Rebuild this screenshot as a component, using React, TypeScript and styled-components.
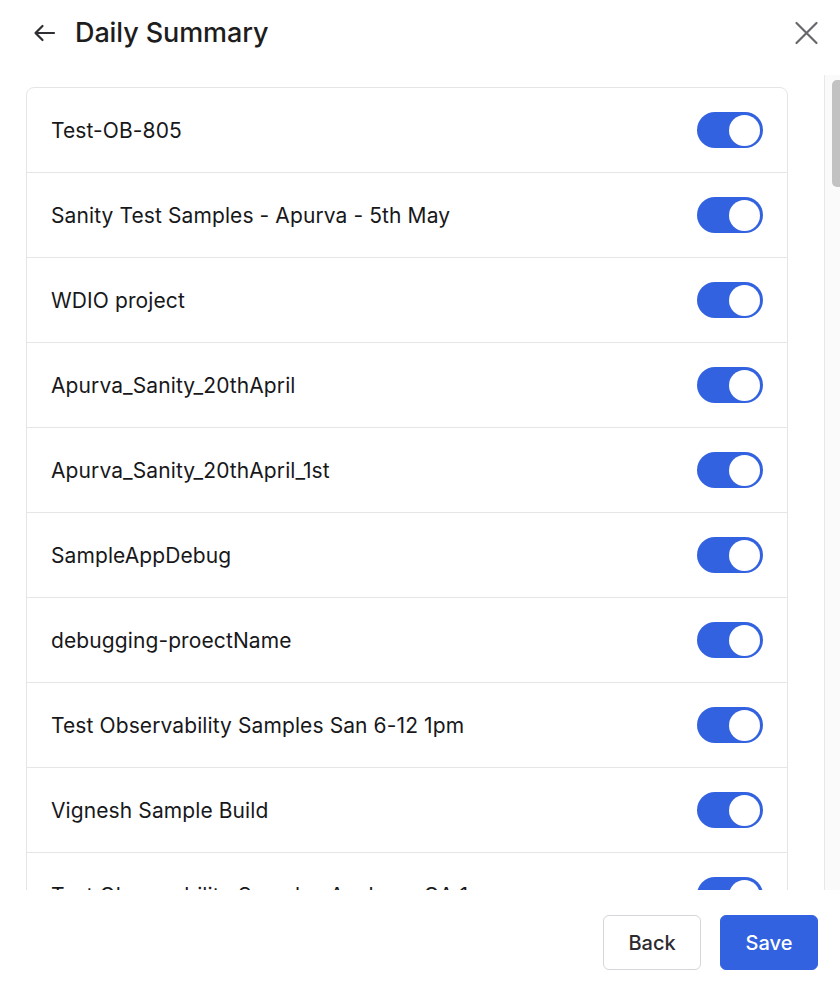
import React from "react";
import styled, { createGlobalStyle } from "styled-components";

const GlobalStyle = createGlobalStyle`
  html, body { margin: 0; padding: 0; background: #ffffff; }
  body { font-family: Inter, "Noto Sans", sans-serif; color: #1c1c1e; }
  * { box-sizing: border-box; }
`;

const Page = styled.div`
  width: 840px;
  height: 986px;
  display: flex;
  flex-direction: column;
  background: #fff;
  overflow: hidden;
`;

const Header = styled.header`
  height: 75px;
  flex: none;
  display: flex;
  align-items: flex-start;
  padding: 18px 18px 0 31px;
`;

const IconButton = styled.button`
  border: 0;
  background: none;
  padding: 0;
  margin: 0;
  display: flex;
  align-items: center;
  justify-content: center;
  cursor: pointer;
`;

const Title = styled.h1`
  margin: 0 0 0 18px;
  font-size: 27px;
  line-height: 30px;
  font-weight: 500;
  color: #1d1d20;
  letter-spacing: -0.1px;
  flex: 1;
`;

const Body = styled.div`
  flex: 1;
  min-height: 0;
  display: flex;
`;

const Scroller = styled.div`
  flex: 1;
  min-width: 0;
  overflow: hidden;
  padding: 12px 36px 0 26px;
`;

const Rail = styled.div`
  width: 16px;
  flex: none;
  background: #fafafa;
  border-left: 1px solid #e8e8e8;
  padding: 5px 0 0 7px;
`;

const Thumb = styled.div`
  height: 107px;
  background: #c2c2c2;
  border-radius: 5px 0 0 5px;
`;

const Card = styled.div`
  border: 1px solid #e5e5e7;
  border-radius: 8px;
  background: #fff;
`;

const Row = styled.div`
  height: 85px;
  display: flex;
  align-items: center;
  justify-content: space-between;
  padding: 0 24px;
  border-top: 1px solid #e6e6e8;
  &:first-child { border-top: 0; height: 84px; }
`;

const Name = styled.span`
  font-size: 21px;
  font-weight: 400;
  color: #18181b;
  letter-spacing: 0.1px;
`;

const Toggle = styled.span<{ $on: boolean }>`
  width: 66px;
  height: 36px;
  border-radius: 18px;
  background: ${(p) => (p.$on ? "#3262df" : "#d0d0d4")};
  display: flex;
  align-items: center;
  justify-content: ${(p) => (p.$on ? "flex-end" : "flex-start")};
  padding: 0 3px;
  flex: none;
`;

const Knob = styled.span`
  width: 31px;
  height: 31px;
  border-radius: 50%;
  background: #fff;
`;

const Footer = styled.footer`
  height: 96px;
  flex: none;
  display: flex;
  justify-content: flex-end;
  align-items: flex-start;
  gap: 19px;
  padding: 25px 22px 0 0;
`;

const Button = styled.button<{ $primary?: boolean }>`
  height: 55px;
  min-width: 98px;
  padding: 0 24px;
  border-radius: 6px;
  font-family: Inter, "Noto Sans", sans-serif;
  font-size: 20px;
  font-weight: 500;
  cursor: pointer;
  border: 1px solid ${(p) => (p.$primary ? "#3262df" : "#d6d6da")};
  background: ${(p) => (p.$primary ? "#3262df" : "#ffffff")};
  color: ${(p) => (p.$primary ? "#ffffff" : "#2b2b30")};
`;

const projects = [
  "Test-OB-805",
  "Sanity Test Samples - Apurva - 5th May",
  "WDIO project",
  "Apurva_Sanity_20thApril",
  "Apurva_Sanity_20thApril_1st",
  "SampleAppDebug",
  "debugging-proectName",
  "Test Observability Samples San 6-12 1pm",
  "Vignesh Sample Build",
  "Test Observability Samples Analyzer QA 1",
];

export default function App() {
  return (
    <>
      <GlobalStyle />
      <Page>
        <Header>
          <IconButton aria-label="Back">
            <svg width="26" height="30" viewBox="0 0 26 30" fill="none">
              <path d="M23 15H4.5M11.5 8L4.5 15L11.5 22" stroke="#2f2f33" strokeWidth="2.2" strokeLinecap="round" strokeLinejoin="round" />
            </svg>
          </IconButton>
          <Title>Daily Summary</Title>
          <IconButton aria-label="Close">
            <svg width="30" height="30" viewBox="0 0 30 30" fill="none">
              <path d="M4.5 5L24.5 25M24.5 5L4.5 25" stroke="#67676c" strokeWidth="2.2" strokeLinecap="round" />
            </svg>
          </IconButton>
        </Header>
        <Body>
          <Scroller>
            <Card>
              {projects.map((name, i) => (
                <Row key={i}>
                  <Name>{name}</Name>
                  <Toggle $on>
                    <Knob />
                  </Toggle>
                </Row>
              ))}
            </Card>
          </Scroller>
          <Rail>
            <Thumb />
          </Rail>
        </Body>
        <Footer>
          <Button>Back</Button>
          <Button $primary>Save</Button>
        </Footer>
      </Page>
    </>
  );
}
